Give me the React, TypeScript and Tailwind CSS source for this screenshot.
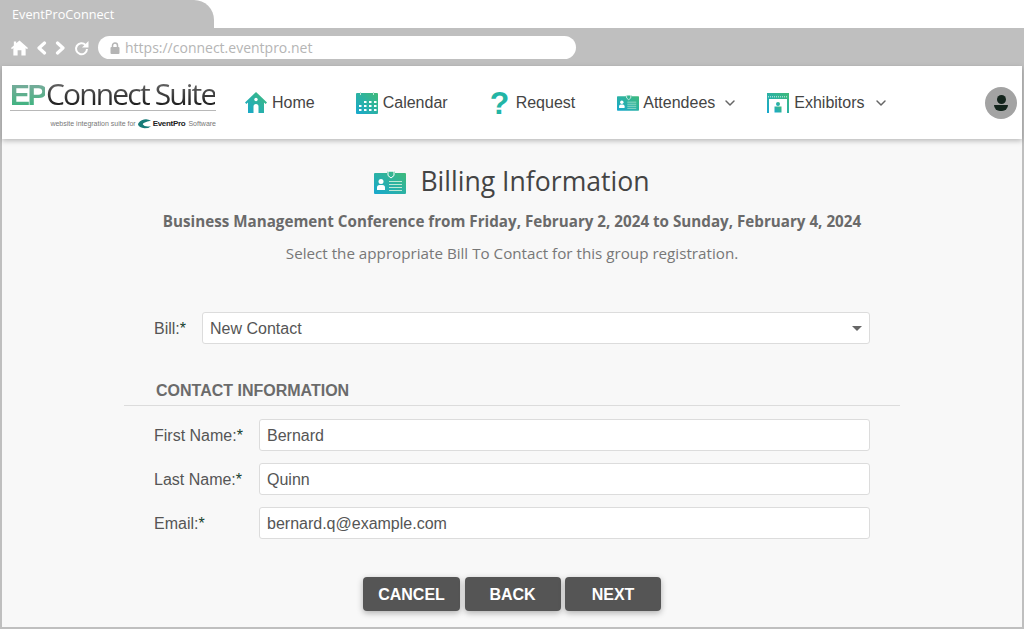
import { ChevronDown } from "lucide-react";

const sans = "font-['Liberation_Sans',Arial,sans-serif]";
const open = "font-['Open_Sans',sans-serif]";

const Grad = ({ id }: { id: string }) => (
	<defs>
		<linearGradient id={id} x1="0" y1="1" x2="1" y2="0">
			<stop offset="0" stopColor="#17a8cf" />
			<stop offset="1" stopColor="#40bb78" />
		</linearGradient>
	</defs>
);

const HomeIcon = () => (
	<svg width="22" height="21" viewBox="0 0 22 21" className="shrink-0">
		<Grad id="g-home" />
		<path fill="url(#g-home)" d="M11 0 22 10.500 20.600 12 19 10.600V21H13.500V14.500Q13.500 12 11 12T8.500 14.500V21H3V10.600L1.400 12 0 10.500Z" />
		<circle cx="11" cy="7.500" r="1.700" fill="#fff" />
	</svg>
);

const CalendarIcon = () => (
	<svg width="22" height="22" viewBox="0 0 22 22" className="shrink-0">
		<Grad id="g-cal" />
		<rect x="0" y="1" width="22" height="21" rx="1" fill="url(#g-cal)" />
		<rect x="4" y="0" width="1" height="3" fill="#bfe6d8" />
		<rect x="17" y="0" width="1" height="3" fill="#bfe6d8" />
		{[9, 13, 17].map((y) =>
			[3, 8, 13, 18].map((x) =>
				y === 9 && x === 3 ? null : <rect key={`${x}-${y}`} x={x} y={y} width="2.500" height="2" fill="#fff" />,
			),
		)}
	</svg>
);

const BadgeIcon = ({ id, w, h }: { id: string; w: number; h: number }) => (
	<svg width={w} height={h} viewBox="0 0 32 24" className="shrink-0">
		<Grad id={id} />
		<path fill={`url(#${id})`} d="M1 3H13V1.500H21V3H31Q32 3 32 4V23Q32 24 31 24H1Q0 24 0 23V4Q0 3 1 3Z" />
		<path fill="none" stroke="#fff" strokeWidth="1" d="M14 1H20V5.500L17 8 14 5.500Z" />
		<circle cx="7" cy="11.500" r="2.500" fill="#fff" />
		<path fill="#fff" d="M3 20V17.500Q3 15 5.500 15H8.500Q11 15 11 17.500V20Z" />
		<path stroke="#bfe9d6" strokeWidth="1" d="M15 11.500H28M15 14.500H28M15 17.500H28M15 20.500H28" />
	</svg>
);

const ExhibitorIcon = () => (
	<svg width="22" height="20" viewBox="0 0 22 20" className="shrink-0">
		<Grad id="g-exh" />
		<path fill="url(#g-exh)" d="M0 0H22V20H20V6H2V20H0Z" />
		<path stroke="#fff" strokeWidth="0.800" strokeDasharray="1 1" d="M1 3.800H21" />
		<circle cx="11" cy="11" r="2" fill="url(#g-exh)" />
		<rect x="7.500" y="13.500" width="7" height="6" fill="url(#g-exh)" />
	</svg>
);

const NavItem = ({ icon, label, caret, className }: { icon: React.ReactNode; label: string; caret?: boolean; className: string }) => (
	<div className={`flex items-center ${className}`}>
		{icon}
		<span className="text-[16px] text-[#444]">{label}</span>
		{caret && <ChevronDown className="size-[16px] text-[#666] ml-[3px]" strokeWidth={2.200} />}
	</div>
);

const Field = ({ label, value }: { label: string; value: string }) => (
	<div className="flex items-center h-[32px]">
		<label className="w-[105px] pt-[1px] text-[16px] text-[#555]">
			{label}
			<span className="text-[#14422e]">*</span>
		</label>
		<div className="flex-1 h-full flex items-center bg-white border border-[#dcdcdc] rounded-[3px] px-[7px] pt-[1px] text-[16px] text-[#555]">
			{value}
		</div>
	</div>
);

const Btn = ({ label, w }: { label: string; w: string }) => (
	<button className={`${w} h-[34px] pt-[1px] rounded-[4px] bg-[#555] text-white font-bold text-[16px] shadow-[0_2px_6px_rgba(0,0,0,0.3)]`}>
		{label}
	</button>
);

export default function App() {
	return (
		<div className={`w-[1024px] h-[629px] flex flex-col overflow-hidden bg-white ${sans}`}>
			{/* browser chrome */}
			<div className={`w-[214px] h-[28px] shrink-0 bg-[#bfbfbf] rounded-tr-[20px] pl-[12px] pt-[1px] flex items-center text-[12.700px] text-white ${open}`}>
				EventProConnect
			</div>
			<div className="h-[38px] shrink-0 bg-[#bfbfbf] flex items-center pl-[11px] pt-[1px]">
				<svg width="17" height="16" viewBox="0 0 18 16" className="shrink-0">
					<path fill="#fff" d="M9 0 18 8 17 9.200 15.500 8V16H11V10.500H7V16H2.500V8L1 9.200 0 8 3 5.300V1H5.500V3.100Z" />
				</svg>
				<svg width="11" height="14" viewBox="0 0 11 14" className="ml-[8px] shrink-0">
					<path fill="none" stroke="#fff" strokeWidth="3.200" strokeLinejoin="round" strokeLinecap="round" d="M8.500 2 3 7 8.500 12" />
				</svg>
				<svg width="11" height="14" viewBox="0 0 11 14" className="ml-[8px] shrink-0">
					<path fill="none" stroke="#fff" strokeWidth="3.200" strokeLinejoin="round" strokeLinecap="round" d="M2.500 2 8 7 2.500 12" />
				</svg>
				<svg width="15" height="16" viewBox="0 0 15 16" className="ml-[8px] shrink-0">
					<path fill="none" stroke="#fff" strokeWidth="2" d="M11.500 5A5.500 5.500 0 1 0 13 9" />
					<path fill="#fff" d="M14.500 1V7.500H8Z" />
				</svg>
				<div className={`ml-[9px] w-[478px] h-[23px] rounded-full bg-white flex items-center pl-[12px] text-[14px] text-[#b5b5b5] ${open}`}>
					<svg width="10" height="12" viewBox="0 0 10 12" className="mr-[5px] shrink-0">
						<path fill="none" stroke="#b5b5b5" strokeWidth="1.500" d="M2.500 5.500V3.500A2.500 2.500 0 0 1 7.500 3.500V5.500" />
						<rect x="0.500" y="5" width="9" height="7" rx="1" fill="#b5b5b5" />
					</svg>
					https://connect.eventpro.net
				</div>
			</div>

			<div className="flex-1 min-h-0 flex flex-col border-x-2 border-b-2 border-[#bfbfbf] bg-[#f8f8f8]">
				{/* nav */}
				<header className="h-[73px] shrink-0 bg-white shadow-[0_2px_5px_rgba(0,0,0,0.25)] flex items-center relative">
					<div className="ml-[8px] mt-[3px] w-[206px] shrink-0 flex flex-col">
						<div className="flex items-baseline h-[31px] leading-[32px] whitespace-nowrap">
							<span className="font-bold text-[30px] tracking-[-2.500px] bg-gradient-to-b from-[#7fa9a0] to-[#25b57a] bg-clip-text text-transparent">EP</span>
							<span className={`text-[30px] tracking-[-1.850px] ml-[1px] bg-gradient-to-b from-[#777] to-[#111] bg-clip-text text-transparent ${open}`}>Connect Suite</span>
						</div>
						<div className="border-t border-[#b8b8b8] mt-[1px] pt-[7px] flex items-center justify-end text-[7px] text-[#777] whitespace-nowrap">
							website integration suite for
							<svg width="13" height="10" viewBox="0 0 12 9" className="mx-[2px]">
								<path fill="#167a78" d="M12 1.500Q8 -1 3.500 1 0 3 0 5 1 8 6 8.500 10 8.500 12 6.500 6 7.500 4.500 5 4 3 12 1.500Z" />
							</svg>
							<span className="font-bold text-[#222] text-[8px] tracking-[-0.300px]">EventPro</span>
							<span className="ml-[3px]">Software</span>
						</div>
					</div>
					<NavItem className="ml-[29px] gap-[5px]" icon={<HomeIcon />} label="Home" />
					<NavItem className="ml-[41px] gap-[5px]" icon={<CalendarIcon />} label="Calendar" />
					<NavItem
						className="ml-[42px] gap-[6px]"
						icon={<span className="w-[20px] text-center text-[32px] leading-[32px] font-bold text-[#22b5a5]">?</span>}
						label="Request"
					/>
					<NavItem className="ml-[42px] gap-[4px]" icon={<BadgeIcon id="g-att" w={22} h={17} />} label="Attendees" caret />
					<NavItem className="ml-[29px] gap-[5px]" icon={<ExhibitorIcon />} label="Exhibitors" caret />
					<div className="ml-auto mr-[5px] size-[32px] rounded-full bg-[#a3a3a3] flex flex-col items-center justify-center">
						<span className="size-[9px] rounded-full bg-[#13241c]" />
						<span className="w-[14px] h-[6px] mt-[1px] rounded-b-full bg-[#13241c]" />
					</div>
				</header>

				{/* page */}
				<main className={`flex-1 flex flex-col items-center ${open}`}>
					<div className="mt-[23px] h-[40px] flex items-center gap-[14px]">
						<BadgeIcon id="g-bill" w={32} h={24} />
						<h1 className="text-[26.600px] text-[#444]">Billing Information</h1>
					</div>
					<p className="mt-[9px] h-[20px] leading-[20px] text-[15.200px] font-bold text-[#6a6a6a]">
						Business Management Conference from Friday, February 2, 2024 to Sunday, February 4, 2024
					</p>
					<p className="mt-[12px] h-[20px] leading-[20px] text-[15.200px] text-[#777]">
						Select the appropriate Bill To Contact for this group registration.
					</p>

					<div className={`mt-[49px] w-[776px] ${sans}`}>
						<div className="pl-[30px] pr-[30px] flex items-center h-[32px]">
							<label className="w-[48px] pt-[1px] text-[16px] text-[#555]">
								Bill:<span className="text-[#14422e]">*</span>
							</label>
							<div className="flex-1 h-full flex items-center justify-between bg-white border border-[#dcdcdc] rounded-[3px] pl-[7px] pr-[7px] pt-[1px] text-[16px] text-[#555]">
								New Contact
								<span className="w-0 h-0 border-x-[5px] border-x-transparent border-t-[5px] border-t-[#666]" />
							</div>
						</div>
						<h2 className="mt-[37px] pl-[32px] h-[25px] border-b border-[#dcdcdc] font-bold text-[16px] leading-[20px] text-[#6b6b6b]">
							CONTACT INFORMATION
						</h2>
						<div className="mt-[13px] pl-[30px] pr-[30px] flex flex-col gap-[12px]">
							<Field label="First Name:" value="Bernard" />
							<Field label="Last Name:" value="Quinn" />
							<Field label="Email:" value="bernard.q@example.com" />
						</div>
						<div className="mt-[38px] flex justify-center gap-[4.500px]">
							<Btn label="CANCEL" w="w-[97px]" />
							<Btn label="BACK" w="w-[96px]" />
							<Btn label="NEXT" w="w-[96px]" />
						</div>
					</div>
				</main>
			</div>
		</div>
	);
}
